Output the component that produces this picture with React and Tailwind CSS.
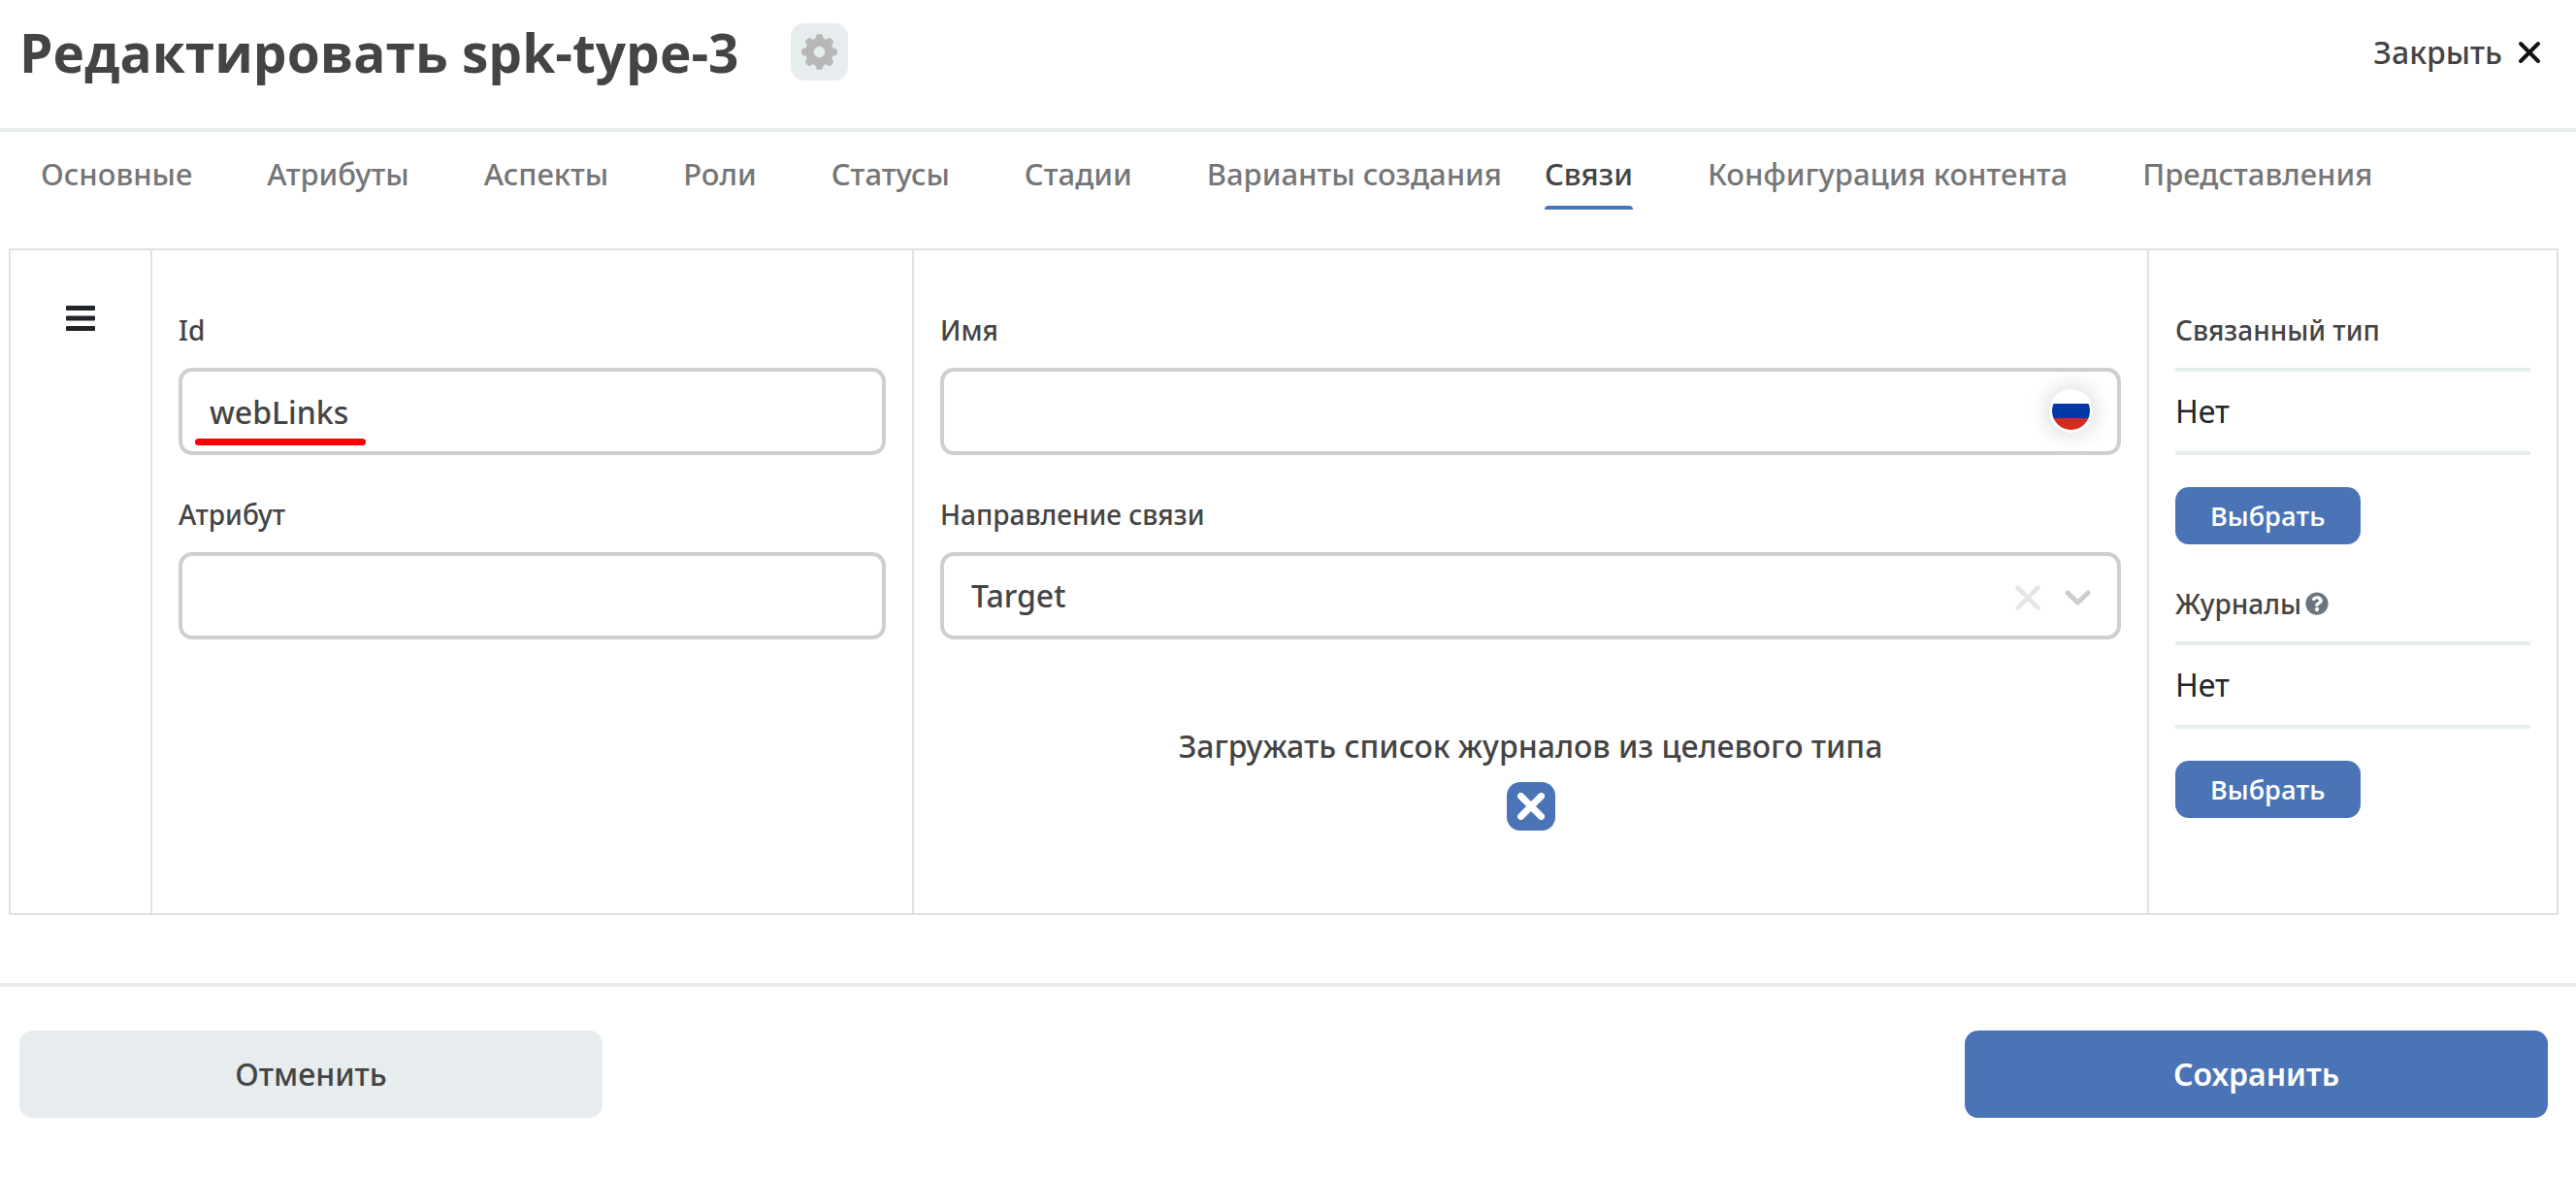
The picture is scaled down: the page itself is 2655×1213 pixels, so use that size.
import { FaQuestionCircle } from "react-icons/fa";

const FIELD =
  "block h-[90px] w-full rounded-[14px] border-4 border-[#cfcfcf] bg-white px-7 text-[32px] font-medium leading-[40px] text-[#444444] outline-none";
const LABEL = "block text-[28px] font-medium leading-[40px] text-[#444444]";

const firstTabs = ["Основные", "Атрибуты", "Аспекты", "Роли", "Статусы", "Стадии", "Варианты создания"];
const lastTabs = ["Связи", "Конфигурация контента", "Представления"];

const gearTeeth = [0, 45, 90, 135, 180, 225, 270, 315];

function Tab({ name, active }) {
  return (
    <button
      type="button"
      role="tab"
      aria-selected={active}
      className={
        active
          ? "relative whitespace-nowrap pb-[17px] text-[31px] font-medium leading-[40px] text-[#444444]"
          : "whitespace-nowrap pb-[17px] text-[31px] font-medium leading-[40px] text-[#767676]"
      }
    >
      {name}
      {active && <span className="absolute inset-x-0 bottom-0 h-1 rounded-t bg-[#4b74b7]" />}
    </button>
  );
}

function Cross({ className, width }) {
  return (
    <svg viewBox="0 0 24 24" className={className} fill="none" stroke="currentColor" strokeWidth={width} strokeLinecap="round" aria-hidden="true">
      <path d="M3 3 21 21M21 3 3 21" />
    </svg>
  );
}

function Gear({ className }) {
  return (
    <svg viewBox="-18.5 -18.5 37 37" className={className} fill="currentColor" aria-hidden="true">
      <circle r="10" fill="none" stroke="currentColor" strokeWidth="8.5" />
      {gearTeeth.map((angle) => (
        <path key={angle} transform={`rotate(${angle})`} d="M-5-12-3.2-17Q-2.8-18.3-1.6-18.3H1.6Q2.8-18.3 3.2-17L5-12Z" />
      ))}
    </svg>
  );
}

function Picker({ label, help }) {
  return (
    <section>
      <div className="flex items-center gap-1">
        <h2 className={LABEL}>{label}</h2>
        {help && (
          <button type="button" aria-label="Подсказка" className="text-[#6c757d]">
            <FaQuestionCircle className="size-6" />
          </button>
        )}
      </div>
      <p className="mt-[19px] flex h-[90px] items-center border-y-4 border-[#e7ecee] text-[32px] font-normal leading-[40px] text-[#212529]">Нет</p>
      <button
        type="button"
        className="mt-[33px] h-[59px] rounded-[14px] bg-[#4b74b7] px-9 font-['Open_Sans',sans-serif] text-[27px] font-semibold leading-[40px] text-white"
      >
        Выбрать
      </button>
    </section>
  );
}

function Flag() {
  return (
    <svg viewBox="0 0 39 39" className="size-full rounded-full" aria-hidden="true">
      <path fill="#ffffff" d="M0 0h39v12H0z" />
      <path fill="#0039a6" d="M0 12h39v15H0z" />
      <path fill="#d52b1e" d="M0 27h39v12H0z" />
    </svg>
  );
}

export default function App() {
  return (
    <div className="bg-white font-['Noto_Sans','Open_Sans',sans-serif] text-[32px] text-[#444444]">
      <header className="flex h-[136px] items-start justify-between border-b-4 border-[#e7ecee] pl-5 pr-9 pt-6">
        <div className="flex items-center gap-[53px]">
          <h1 className="font-['Open_Sans',sans-serif] text-[55px] font-bold leading-[59px]">Редактировать spk-type-3</h1>
          <button type="button" aria-label="Настройки" className="flex size-[59px] items-center justify-center rounded-[14px] bg-[#e7ecee]">
            <Gear className="size-[37px] text-[#b7b7b7]" />
          </button>
        </div>
        <button type="button" className="flex h-[59px] items-center gap-4 font-medium">
          Закрыть
          <Cross width="4" className="size-6 text-[#111111]" />
        </button>
      </header>

      <nav role="tablist" className="flex gap-11 px-[42px] pt-[23px]">
        <div className="flex gap-[77px]">
          {firstTabs.map((name) => (
            <Tab key={name} name={name} active={false} />
          ))}
        </div>
        <div className="flex gap-[77px]">
          {lastTabs.map((name, i) => (
            <Tab key={name} name={name} active={i === 0} />
          ))}
        </div>
      </nav>

      <main className="ml-[9px] mr-[18px] mt-10 grid grid-cols-[146px_785fr_1273fr_420fr] border-2 border-[#dee2e6]">
        <div className="flex justify-center border-r-2 border-[#dee2e6] pt-[57px]">
          <svg viewBox="0 0 30 26" className="h-[26px] w-[30px]" fill="#212529" role="img" aria-label="Переместить">
            <rect width="30" height="5" rx="1" />
            <rect y="10.5" width="30" height="5" rx="1" />
            <rect y="21" width="30" height="5" rx="1" />
          </svg>
        </div>

        <div className="border-r-2 border-[#dee2e6] px-[27px] pt-[62px]">
          <label htmlFor="assoc-id" className={LABEL}>Id</label>
          <div className="relative mt-[19px]">
            <input id="assoc-id" defaultValue="webLinks" className={FIELD} />
            <span className="absolute bottom-[10px] left-[17px] h-[7px] w-[176px] rounded-full bg-[#ff0000]" />
          </div>
          <label htmlFor="assoc-attribute" className={`mt-[41px] ${LABEL}`}>Атрибут</label>
          <input id="assoc-attribute" className={`mt-[19px] ${FIELD}`} />
        </div>

        <div className="border-r-2 border-[#dee2e6] px-[27px] pb-[85px] pt-[62px]">
          <label htmlFor="assoc-name" className={LABEL}>Имя</label>
          <div className="relative mt-[19px]">
            <input id="assoc-name" className={FIELD} />
            <button
              type="button"
              aria-label="Русский"
              className="absolute right-[29px] top-[22px] size-[45px] rounded-full bg-white p-[3px] shadow-[0_0_24px_rgba(0,0,0,0.2)]"
            >
              <Flag />
            </button>
          </div>
          <label htmlFor="assoc-direction" className={`mt-[41px] ${LABEL}`}>Направление связи</label>
          <div className="relative mt-[19px]">
            <select id="assoc-direction" defaultValue="Target" className={`appearance-none ${FIELD}`}>
              <option>Target</option>
              <option>Source</option>
            </select>
            <div className="pointer-events-none absolute inset-y-0 right-[31px] flex items-center gap-6 pt-1">
              <Cross width="4" className="size-7 text-[#e6e6e6]" />
              <svg viewBox="0 0 27 16" className="h-4 w-[27px] text-[#cccccc]" fill="none" stroke="currentColor" strokeWidth="5" strokeLinecap="round" strokeLinejoin="round" aria-hidden="true">
                <path d="M3 3 13.5 13 24 3" />
              </svg>
            </div>
          </div>
          <label className="mt-[90px] flex flex-col items-center gap-[17px] font-medium leading-[40px]">
            Загружать список журналов из целевого типа
            <span className="relative size-[50px]">
              <input type="checkbox" defaultChecked className="block size-full appearance-none rounded-[14px] bg-[#4b74b7]" />
              <Cross width="6" className="pointer-events-none absolute inset-[11px] size-7 text-white" />
            </span>
          </label>
        </div>

        <div className="flex flex-col gap-[41px] px-[27px] pt-[62px]">
          <Picker label="Связанный тип" />
          <Picker label="Журналы" help />
        </div>
      </main>

      <footer className="mt-[70px] flex justify-between border-t-4 border-[#e7ecee] pb-[61px] pl-5 pr-[29px] pt-[45px]">
        <button type="button" className="h-[90px] w-[601px] rounded-[14px] bg-[#e7ecee] font-medium">Отменить</button>
        <button type="button" className="h-[90px] w-[601px] rounded-[14px] bg-[#4b74b7] font-semibold text-white">Сохранить</button>
      </footer>
    </div>
  );
}
